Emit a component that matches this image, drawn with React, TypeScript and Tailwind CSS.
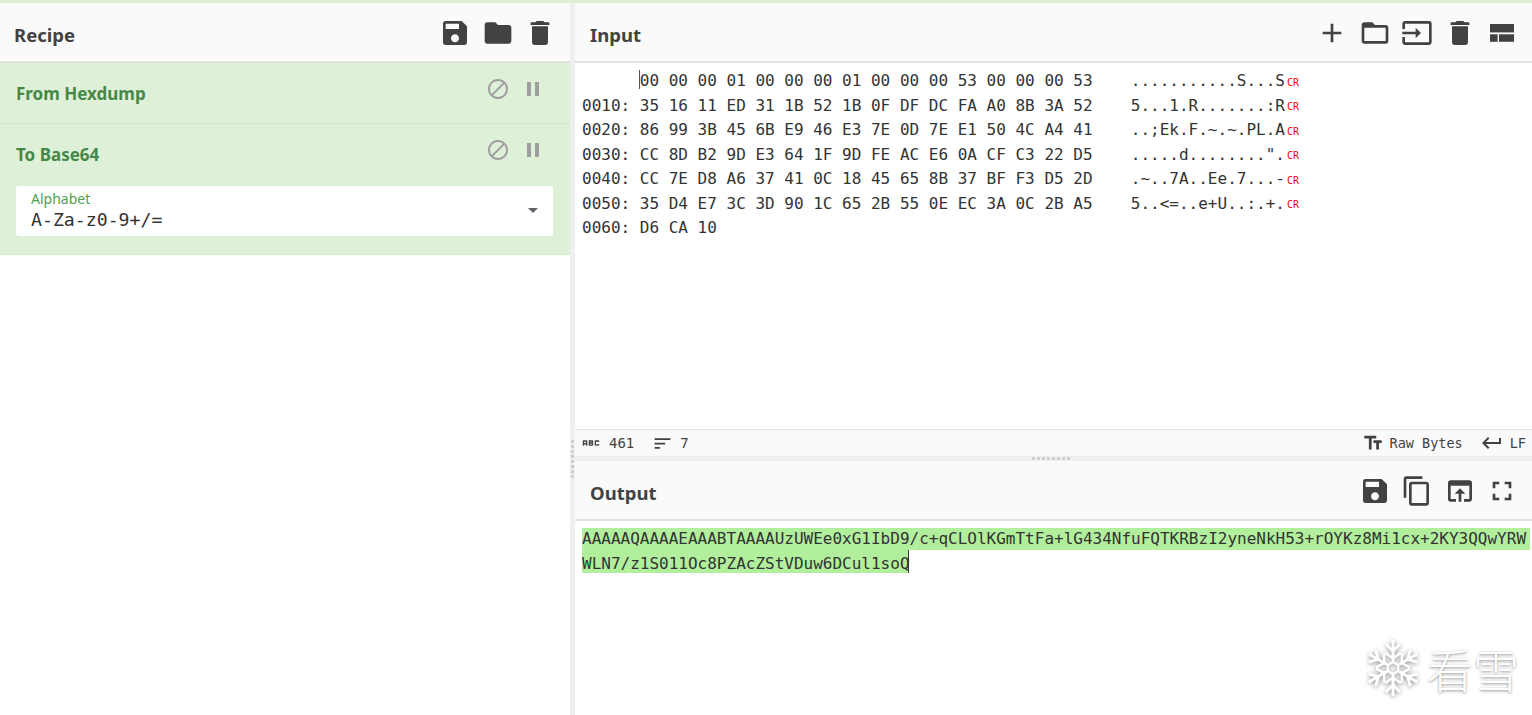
import React from "react";
import {
  MdSave,
  MdFolder,
  MdDelete,
  MdAdd,
  MdFolderOpen,
  MdInput,
  MdContentCopy,
  MdOpenInBrowser,
  MdFullscreen,
  MdBlock,
  MdPause,
  MdTextFields,
  MdKeyboardReturn,
  MdSort,
  MdAbc,
  MdArrowDropDown,
} from "react-icons/md";

const hexRows = [
  { offset: "      ", hex: "00 00 00 01 00 00 00 01 00 00 00 53 00 00 00 53", text: "...........S...S" },
  { offset: "0010: ", hex: "35 16 11 ED 31 1B 52 1B 0F DF DC FA A0 8B 3A 52", text: "5...1.R.......:R" },
  { offset: "0020: ", hex: "86 99 3B 45 6B E9 46 E3 7E 0D 7E E1 50 4C A4 41", text: "..;Ek.F.~.~.PL.A" },
  { offset: "0030: ", hex: "CC 8D B2 9D E3 64 1F 9D FE AC E6 0A CF C3 22 D5", text: '.....d........".' },
  { offset: "0040: ", hex: "CC 7E D8 A6 37 41 0C 18 45 65 8B 37 BF F3 D5 2D", text: ".~..7A..Ee.7...-" },
  { offset: "0050: ", hex: "35 D4 E7 3C 3D 90 1C 65 2B 55 0E EC 3A 0C 2B A5", text: "5..<=..e+U..:.+." },
  { offset: "0060: ", hex: "D6 CA 10", text: "" },
];

function ToolButton({ children }: { children: React.ReactNode }) {
  return <div className="w-[42.5px] pt-[2px] flex justify-center items-center text-[#424242]">{children}</div>;
}

function PanelHeader({ title, children, inset }: { title: string; children: React.ReactNode; inset?: boolean }) {
  return (
    <div className={`h-[60px] shrink-0 bg-[#fafafa] border-b-2 border-[#e2e2e2] flex items-center justify-between pr-[8.5px] ${inset ? "pl-[15px]" : "pl-[14px]"}`}>
      <span className="text-[18.5px] font-bold text-[#424242] font-['Noto_Sans',sans-serif] pt-[6px]">{title}</span>
      <div className="flex items-center">{children}</div>
    </div>
  );
}

function Operation({ name, children, last }: { name: string; children?: React.ReactNode; last?: boolean }) {
  return (
    <div className={`bg-[#dff0d8] border-b border-[#d3e7c9] px-[16px] ${last ? "h-[131px]" : "h-[61px]"}`}>
      <div className="flex items-center justify-between h-[60px]">
        <span className="text-[17px] font-bold text-[#468847] font-['Noto_Sans',sans-serif] pt-[2px]">{name}</span>
        <div className="flex items-center gap-[11px] text-[#9e9e9e] mr-[9px] -mt-[8px]">
          <MdBlock size={24} />
          <MdPause size={24} />
        </div>
      </div>
      {children}
    </div>
  );
}

function Dots({ count, vertical }: { count: number; vertical?: boolean }) {
  return (
    <div className={`flex ${vertical ? "flex-col gap-[2px]" : "gap-[2px]"}`}>
      {Array.from({ length: count }).map((_, i) => (
        <div key={i} className="w-[3px] h-[3px] bg-[#cfcfcf]" />
      ))}
    </div>
  );
}

function LayoutIcon() {
  return (
    <svg width="32" height="32" viewBox="0 0 32 32" fill="currentColor">
      <rect x="4" y="7" width="24" height="8.4" />
      <rect x="4" y="17.3" width="7.6" height="7.5" />
      <rect x="13" y="17.3" width="15" height="7.5" />
    </svg>
  );
}

function Snowflake() {
  const arms = [0, 60, 120, 180, 240, 300];
  return (
    <svg width="60" height="60" viewBox="-30 -30 60 60" className="drop-shadow-[0_1px_2px_rgba(0,0,0,0.45)]">
      <g stroke="#ffffff" fill="none" strokeWidth="3">
        <polygon points="0,-6 5.2,-3 5.2,3 0,6 -5.2,3 -5.2,-3" strokeWidth="2.4" />
        {arms.map((a) => (
          <g key={a} transform={`rotate(${a})`}>
            <path d="M0 -7 V-28" />
            <path d="M-7 -24 L0 -17 L7 -24" />
            <path d="M-8 -15 L0 -10 L8 -15" strokeWidth="2.4" />
          </g>
        ))}
      </g>
    </svg>
  );
}

export default function App() {
  return (
    <div className="relative w-[1532px] h-[715px] overflow-hidden bg-white flex flex-col font-['DejaVu_Sans_Mono',monospace] text-[#333]">
      <div className="h-[3px] shrink-0 bg-[#dff0d8]" />
      <div className="flex flex-1 min-h-0">
        <div className="w-[570px] shrink-0 flex flex-col">
          <PanelHeader title="Recipe">
            <ToolButton><MdSave size={32} /></ToolButton>
            <ToolButton><MdFolder size={32} /></ToolButton>
            <ToolButton><MdDelete size={32} /></ToolButton>
          </PanelHeader>
          <Operation name="From Hexdump" />
          <Operation name="To Base64" last>
            <div className="relative h-[50px] mt-[2px] bg-white rounded-[3px] pl-[15px] pt-[4px] mr-[1px]">
              <div className="text-[14px] leading-[18px] text-[#4f9f52] font-['Noto_Sans',sans-serif] font-normal">Alphabet</div>
              <div className="text-[18.2px] leading-[24px] text-[#333]">A-Za-z0-9+/=</div>
              <MdArrowDropDown size={24} className="absolute right-[8px] top-[12px] text-[#5f6368]" />
            </div>
          </Operation>
        </div>

        <div className="w-[5px] shrink-0 bg-[#efefef] flex flex-col items-center">
          <div className="h-[437px]" />
          <Dots count={8} vertical />
        </div>

        <div className="flex-1 min-w-0 flex flex-col">
          <PanelHeader title="Input" inset>
            <ToolButton><MdAdd size={32} /></ToolButton>
            <ToolButton><MdFolderOpen size={32} /></ToolButton>
            <ToolButton><MdInput size={32} /></ToolButton>
            <ToolButton><MdDelete size={32} /></ToolButton>
            <ToolButton><LayoutIcon /></ToolButton>
          </PanelHeader>

          <div className="relative h-[366px] shrink-0 pl-[7px] pt-[6px] text-[16px] leading-[24.5px] whitespace-pre">
            <div className="absolute left-[64px] top-[7px] w-px h-[19px] bg-[#555]" />
            {hexRows.map((row) => (
              <div key={row.offset + row.hex} className="flex items-center h-[24.5px]">
                <span>{row.offset}</span>
                <span className="w-[491px]">{row.hex}</span>
                <span>{row.text}</span>
                {row.text && <span className="text-[10px] text-[#f00000] ml-[2px] pt-[3px]">CR</span>}
              </div>
            ))}
          </div>

          <div className="h-[27px] shrink-0 bg-[#fafafa] border-t border-[#e2e2e2] flex items-center justify-between pl-[5px] pr-[6px] text-[13.5px] text-[#424242]">
            <div className="flex items-center">
              <MdAbc size={22} className="text-[#424242]" />
              <span className="ml-[7px] text-[14px]">461</span>
              <MdSort size={21} className="ml-[18px]" />
              <span className="ml-[7px] text-[14px]">7</span>
            </div>
            <div className="flex items-center">
              <MdTextFields size={22} />
              <span className="ml-[6px]">Raw Bytes</span>
              <MdKeyboardReturn size={24} className="ml-[17px]" />
              <span className="ml-[6px]">LF</span>
            </div>
          </div>

          <div className="h-[5px] shrink-0 bg-[#efefef] flex justify-center items-center">
            <div className="ml-[-6px]">
              <Dots count={8} />
            </div>
          </div>

          <PanelHeader title="Output" inset>
            <ToolButton><MdSave size={32} /></ToolButton>
            <ToolButton><MdContentCopy size={32} /></ToolButton>
            <ToolButton><MdOpenInBrowser size={32} /></ToolButton>
            <ToolButton><MdFullscreen size={32} /></ToolButton>
          </PanelHeader>

          <div className="flex-1 pl-[7px] pt-[7px] text-[16px] whitespace-pre">
            <div className="w-[948px] h-[22px] leading-[22px] bg-[#b1ef9c]">AAAAAQAAAAEAAABTAAAAUzUWEe0xG1IbD9/c+qCLOlKGmTtFa+lG434NfuFQTKRBzI2yneNkH53+rOYKz8Mi1cx+2KY3QQwYRW</div>
            <div className="relative w-[327px] h-[23px] leading-[27px] bg-[#b1ef9c]">
              WLN7/z1S011Oc8PZAcZStVDuw6DCul1soQ
              <div className="absolute right-0 top-0 w-px h-[23px] bg-[#333]" />
            </div>
          </div>
        </div>
      </div>

      <div className="absolute right-[13px] bottom-[17px] flex items-center">
        <Snowflake />
        <span className="ml-[4px] text-[46px] leading-[52px] font-light text-white font-['Noto_Sans_CJK_SC',sans-serif] [text-shadow:0_1px_3px_rgba(0,0,0,0.45)]">看雪</span>
      </div>
    </div>
  );
}
